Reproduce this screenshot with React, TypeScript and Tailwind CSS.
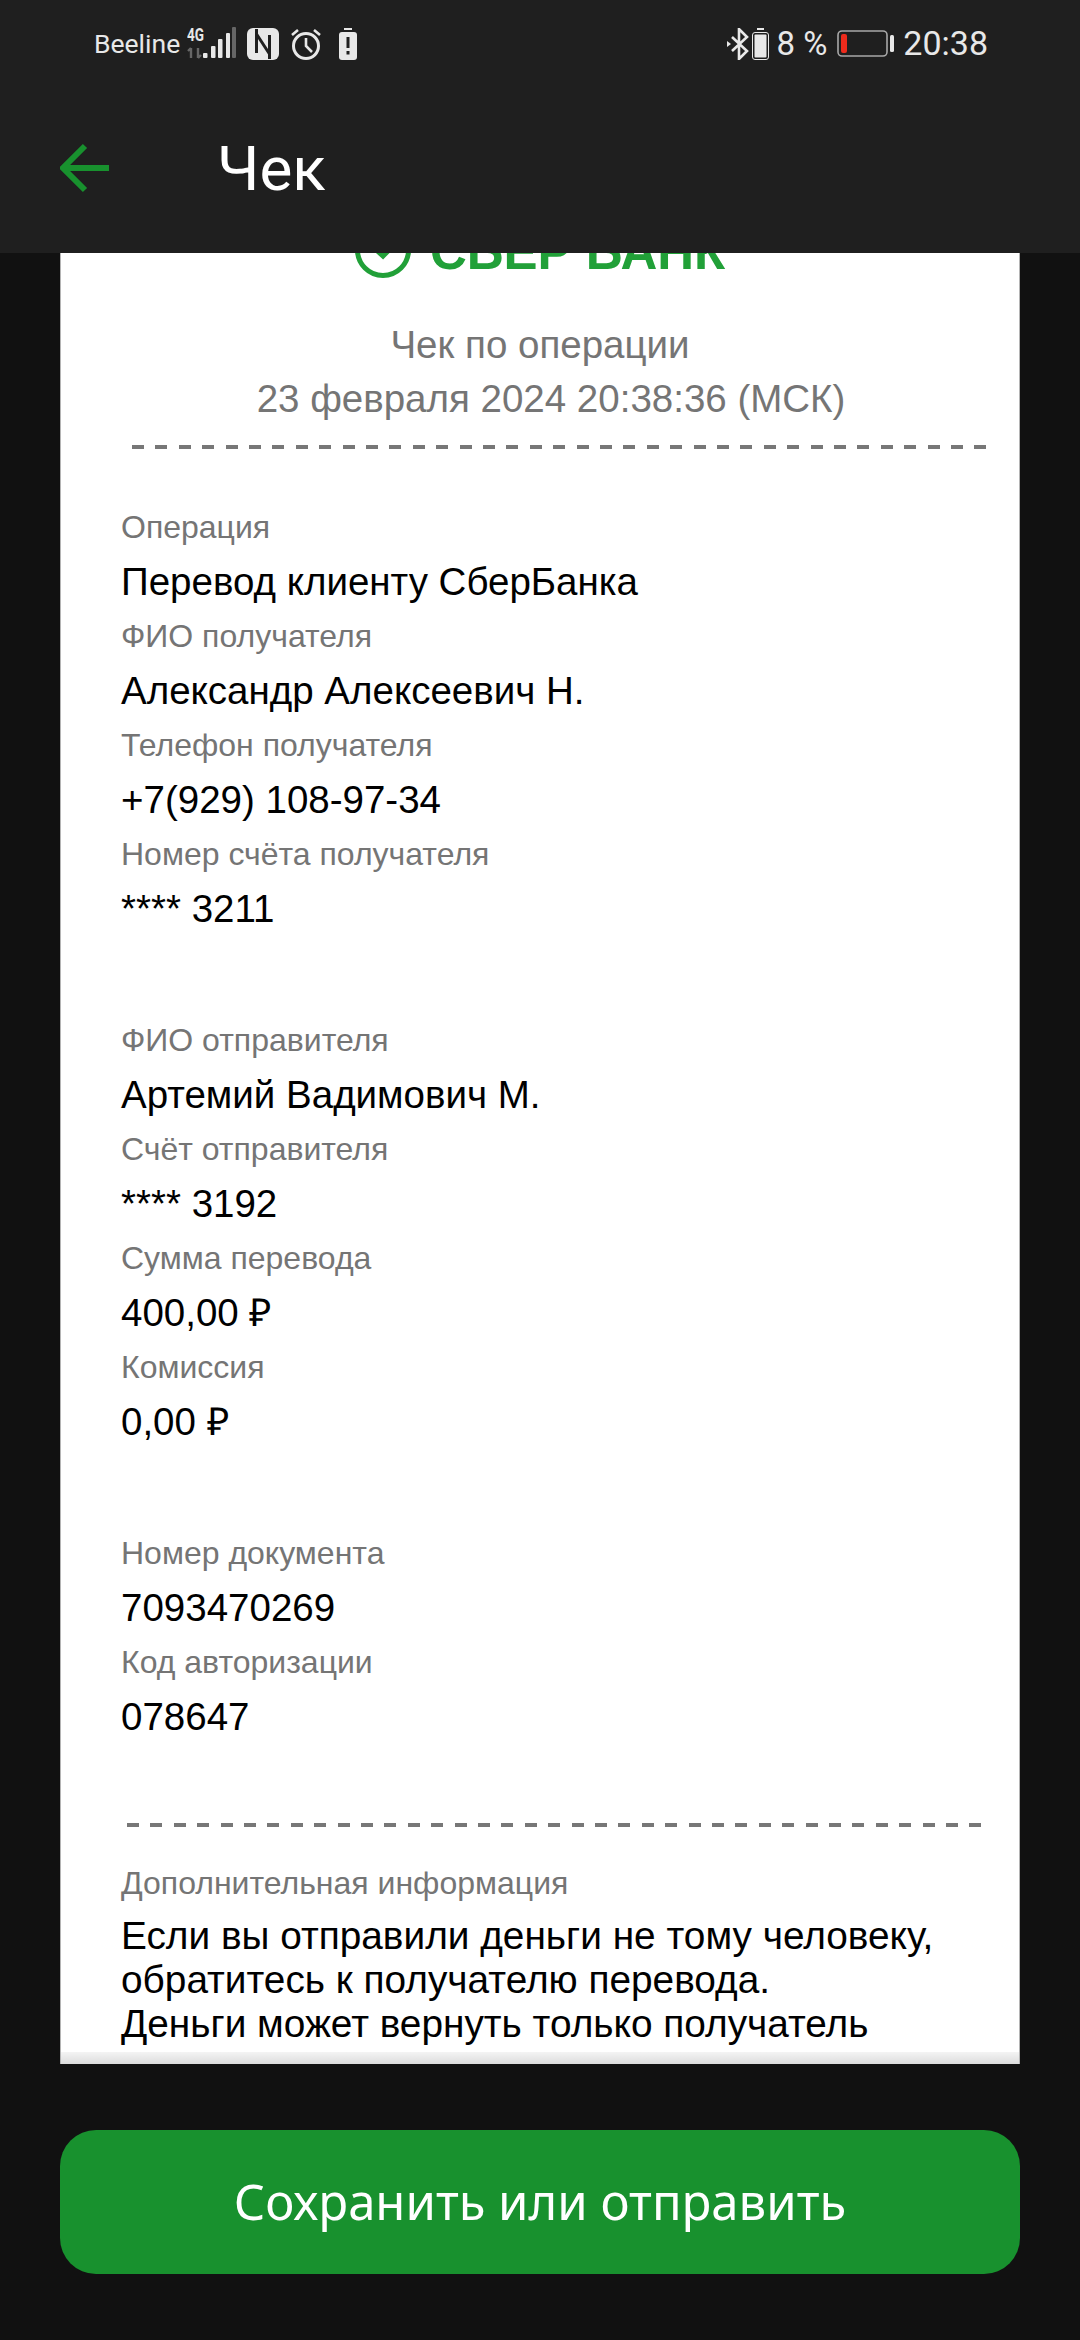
const sans = "font-['Liberation_Sans',Arial,sans-serif]";

function Field({ label, value }: { label: string; value: string }) {
  return (
    <div>
      <div className="h-[54px] flex items-center text-[32px] text-[#757575]">{label}</div>
      <div className="h-[55px] flex items-center text-[38.5px] text-black">{value}</div>
    </div>
  );
}

function Dashes({ className }: { className: string }) {
  return (
    <div className={`h-[4px] bg-[repeating-linear-gradient(90deg,#777777_0,#777777_12px,transparent_12px,transparent_23.4px)] ${className}`} />
  );
}

function SignalBars() {
  return (
    <svg width="60" height="44" viewBox="0 -5 60 44" className="block">
      <text x="0" y="14" fontSize="18" fontWeight="700" fill="#e8e8e8" fontFamily="Roboto, sans-serif" textLength="17" lengthAdjust="spacingAndGlyphs">4G</text>
      <path d="M4 31v-10M1 24l3-3M11 21v10M11 31l3-3" stroke="#666" strokeWidth="2.4" fill="none" />
      <rect x="16" y="26" width="4.5" height="5" rx="1" fill="#e8e8e8" />
      <rect x="24" y="19" width="4.5" height="12" rx="1" fill="#e8e8e8" />
      <rect x="31" y="12" width="4.5" height="19" rx="1" fill="#e8e8e8" />
      <rect x="39" y="6" width="4" height="25" rx="1" fill="#e8e8e8" />
      <rect x="45" y="0" width="4" height="31" rx="1" fill="#666" />
    </svg>
  );
}

function NfcIcon() {
  return (
    <svg width="32" height="32" viewBox="0 0 32 32" className="block">
      <rect width="32" height="32" rx="6" fill="#e8e8e8" />
      <path d="M9.5 1v24M9.5 6l13 20M22.5 7v24" stroke="#1f1f1f" strokeWidth="3" fill="none" />
    </svg>
  );
}

function AlarmIcon() {
  return (
    <svg width="32" height="32" viewBox="0 0 32 32" fill="none" className="block">
      <circle cx="16" cy="18" r="12.5" stroke="#e8e8e8" strokeWidth="3" />
      <path d="M16 10v8l6 6M2 7l6-5M30 7l-6-5" stroke="#e8e8e8" strokeWidth="2.6" />
    </svg>
  );
}

function AlertBattery() {
  return (
    <svg width="18" height="32" viewBox="0 0 18 32" className="block">
      <rect x="5" width="8" height="2" fill="#e8e8e8" />
      <rect y="4" width="18" height="28" rx="3" fill="#e8e8e8" />
      <rect x="7.5" y="9" width="3" height="11" fill="#1f1f1f" />
      <rect x="7.5" y="23" width="3" height="3.5" fill="#1f1f1f" />
    </svg>
  );
}

function Bluetooth() {
  return (
    <svg width="22" height="32" viewBox="0 0 22 32" fill="none" className="block">
      <path d="M5 9l15 14-8 8V1l8 8L5 23" stroke="#e8e8e8" strokeWidth="2.6" />
      <path d="M0 13l4 3-4 3z" fill="#e8e8e8" />
    </svg>
  );
}

function SmallBattery() {
  return (
    <svg width="17" height="32" viewBox="0 0 17 32" fill="none" className="block">
      <rect x="5" width="7" height="2" fill="#e8e8e8" />
      <rect x="0.5" y="4.5" width="16" height="27" rx="2.5" stroke="#e8e8e8" />
      <rect x="2.5" y="6.5" width="12" height="23" rx="1" fill="#e8e8e8" />
    </svg>
  );
}

function RedBattery() {
  return (
    <svg width="58" height="28" viewBox="0 0 58 28" fill="none" className="block">
      <rect x="1" y="1" width="49" height="25" rx="4" stroke="#a8a8a8" strokeWidth="1.6" />
      <rect x="4" y="4" width="6" height="19" rx="2" fill="#ee2b1c" />
      <rect x="53" y="5" width="4" height="17" rx="1.5" fill="#e8e8e8" />
    </svg>
  );
}

function ShieldMark() {
  return (
    <svg width="56" height="56" viewBox="0 0 56 56" fill="none" className="block shrink-0">
      <circle cx="28" cy="28" r="25.5" stroke="#21a038" strokeWidth="5" />
      <path d="M17 24l11 10 17-17" stroke="#21a038" strokeWidth="5" />
    </svg>
  );
}

export default function App() {
  return (
    <div className={`h-[2340px] w-[1080px] flex flex-col bg-[#111111] overflow-hidden ${sans}`}>
      <header className="h-[253px] shrink-0 bg-[#1f1f1f] z-10">
        <div className="h-[84px] flex items-center justify-between pl-[94px] pr-[92px] pt-[3px] font-['Roboto',sans-serif] text-[#e8e8e8]">
          <div className="flex items-center">
            <span className="text-[26.5px] mr-[7px]">Beeline</span>
            <SignalBars />
            <div className="flex items-center gap-[11px]">
              <NfcIcon />
              <AlarmIcon />
              <div className="ml-[6px]"><AlertBattery /></div>
            </div>
          </div>
          <div className="flex items-center">
            <Bluetooth />
            <div className="ml-[3px]"><SmallBattery /></div>
            <span className="text-[33px] ml-[7px]">8 %</span>
            <div className="ml-[10px]"><RedBattery /></div>
            <span className="text-[34px] ml-[8px]">20:38</span>
          </div>
        </div>
        <div className="flex items-center h-[84px] pl-[60px] mt-[42px]">
          <svg width="50" height="50" viewBox="0 0 50 50" fill="none" className="block">
            <path d="M49 25H4M25 3 3 25l22 22" stroke="#18912e" strokeWidth="6" />
          </svg>
          <span className="ml-[107px] text-[62px] text-white font-['Roboto',sans-serif]">Чек</span>
        </div>
      </header>

      <main className="relative h-[1811px] shrink-0 mx-[60px] bg-white border-x border-[#b4b4b4] overflow-hidden">
        <div className="-mt-[31px] h-[56px] flex items-end pl-[294px]">
          <ShieldMark />
          <span className="ml-[19px] mb-[8px] text-[#21a038] text-[51px] font-bold leading-[36px]">СБЕР БАНК</span>
        </div>
        <div className="pt-[40px] text-center text-[38.5px] text-[#757575] leading-[54px]">
          <div>Чек по операции</div>
          <div className="pl-[22px]">23 февраля 2024 20:38:36 (МСК)</div>
        </div>
        <Dashes className="mt-[19px] ml-[71px] w-[856px]" />
        <div className="pl-[60px] pt-[51px]">
          <Field label="Операция" value="Перевод клиенту СберБанка" />
          <Field label="ФИО получателя" value="Александр Алексеевич Н." />
          <Field label="Телефон получателя" value="+7(929) 108-97-34" />
          <Field label="Номер счёта получателя" value="**** 3211" />
          <div className="pt-[77px]">
            <Field label="ФИО отправителя" value="Артемий Вадимович М." />
            <Field label="Счёт отправителя" value="**** 3192" />
            <Field label="Сумма перевода" value="400,00 ₽" />
            <Field label="Комиссия" value="0,00 ₽" />
          </div>
          <div className="pt-[77px]">
            <Field label="Номер документа" value="7093470269" />
            <Field label="Код авторизации" value="078647" />
          </div>
        </div>
        <Dashes className="mt-[79px] ml-[66px] w-[856px]" />
        <div className="pl-[60px] pt-[29px]">
          <div className="h-[54px] flex items-center text-[32px] text-[#757575]">Дополнительная информация</div>
          <div className="pt-[4px] text-[38.8px] leading-[44px] text-black">
            Если вы отправили деньги не тому человеку,<br />
            обратитесь к получателю перевода.<br />
            Деньги может вернуть только получатель
          </div>
        </div>
        <div className="absolute inset-x-0 bottom-0 h-[12px] bg-gradient-to-b from-[#f4f4f4] to-[#dcdcdc]" />
      </main>

      <div className="px-[60px] pt-[66px]">
        <button className="w-full h-[144px] rounded-[36px] bg-[#18912e] text-white text-[49px] font-['Noto_Sans',sans-serif]">
          Сохранить или отправить
        </button>
      </div>
    </div>
  );
}
